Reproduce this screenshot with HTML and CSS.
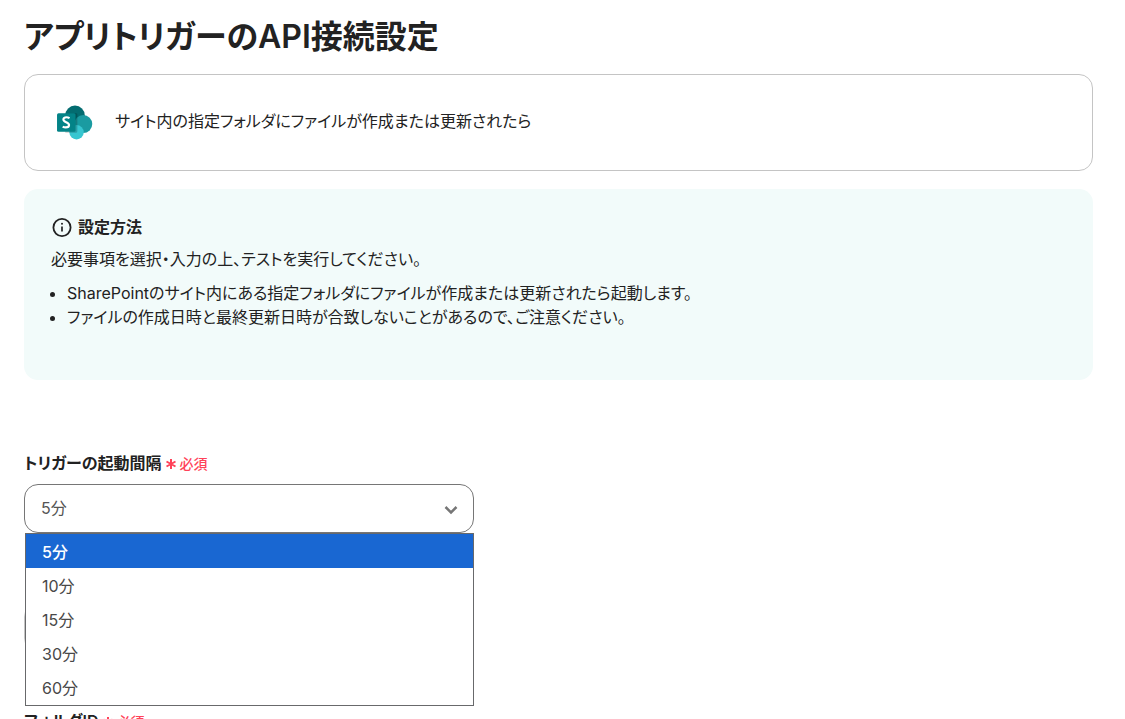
FILE: index.html
```html
<!DOCTYPE html>
<html lang="ja">
<head>
<meta charset="utf-8">
<meta name="viewport" content="width=device-width, initial-scale=1">
<title>アプリトリガーのAPI接続設定</title>
<link rel="stylesheet" href="styles.css">
</head>
<body>
<main class="page">
  <h1 class="title">アプリトリガーのAPI接続設定</h1>

  <section class="trigger-card">
    <svg class="trigger-logo" viewBox="0 0 36 36" aria-hidden="true">
      <circle cx="18.5" cy="11" r="9.5" fill="#036c70"/>
      <circle cx="26.500" cy="19.500" r="8.800" fill="#1a9ba1"/>
      <circle cx="20" cy="27.500" r="7" fill="#37c6d0"/>
      <path d="M9 9h10.500a1.300 1.300 0 0 1 1.300 1.300v16.200a1.500 1.500 0 0 1-1.500 1.500H9z" fill="#000" opacity=".2"/>
      <rect x="1" y="9" width="18" height="18" rx="1.500" fill="#038387"/>
      <path d="M13.200 13.800c-1-.6-2-.9-3.100-.9-1.700 0-2.900.8-2.900 2.200 0 3 5.500 2.200 5.500 5.300 0 1.500-1.300 2.400-3.200 2.400-1.100 0-2.200-.3-3-.8" fill="none" stroke="#fff" stroke-width="2.100"/>
    </svg>
    <p class="trigger-text">サイト内の指定フォルダにファイルが作成または更新されたら</p>
  </section>

  <section class="guide">
    <h2 class="guide-title">
      <svg class="guide-icon" viewBox="0 0 20 20" aria-hidden="true">
        <circle cx="10.500" cy="10.500" r="8.600" fill="none" stroke="#222" stroke-width="1.800"/>
        <path d="M10.500 9.500v5" stroke="#222" stroke-width="1.700"/>
        <circle cx="10.500" cy="6.800" r="1" fill="#222"/>
      </svg>
      設定方法
    </h2>
    <p class="guide-text">必要事項を選択・入力の上、テストを実行してください。</p>
    <ul class="guide-list">
      <li>SharePointのサイト内にある指定フォルダにファイルが作成または更新されたら起動します。</li>
      <li>ファイルの作成日時と最終更新日時が合致しないことがあるので、ご注意ください。</li>
    </ul>
  </section>

  <form class="form">
    <div class="field">
      <div class="label-row">
        <label class="label" for="interval">トリガーの起動間隔</label>
        <span class="required">
          <svg class="asterisk" viewBox="0 0 12 12" aria-hidden="true"><path d="M6 1v10M1.500 3.500l9 5M10.500 3.500l-9 5"/></svg>
          必須
        </span>
      </div>
      <div class="select-box">
        <select class="select" id="interval">
          <option>5分</option>
          <option>10分</option>
          <option>15分</option>
          <option>30分</option>
          <option>60分</option>
        </select>
        <svg class="chevron" viewBox="0 0 14 10" aria-hidden="true"><path d="M1.500 2L7 7.500 12.500 2"/></svg>
        <ul class="options" role="listbox" aria-label="トリガーの起動間隔">
          <li class="option option-active" role="option" aria-selected="true">5分</li>
          <li class="option" role="option" aria-selected="false">10分</li>
          <li class="option" role="option" aria-selected="false">15分</li>
          <li class="option" role="option" aria-selected="false">30分</li>
          <li class="option" role="option" aria-selected="false">60分</li>
        </ul>
      </div>
    </div>
    <div class="field field-covered">
      <input class="input" type="text" aria-label="ID">
    </div>
    <div class="field">
      <div class="label-row">
        <label class="label" for="folder">フォルダID</label>
        <span class="required">
          <svg class="asterisk" viewBox="0 0 12 12" aria-hidden="true"><path d="M6 1v10M1.500 3.500l9 5M10.500 3.500l-9 5"/></svg>
          必須
        </span>
      </div>
      <input class="input" id="folder" type="text">
    </div>
  </form>
</main>
</body>
</html>
```
FILE: styles.css
```css
* {
  box-sizing: border-box;
}

html {
  overflow: hidden;
}

body {
  margin: 0;
  height: 100vh;
  overflow: hidden;
  background: #fff;
  color: #222;
  font-family: Inter, "Noto Sans CJK JP", sans-serif;
  font-size: 16px;
  line-height: 24px;
  font-feature-settings: "palt";
}

h1, h2, p, ul {
  margin: 0;
  padding: 0;
}

.page {
  padding: 13px 32px 0 24px;
}

.title {
  font-size: 32px;
  line-height: 48px;
  font-weight: 600;
}

.trigger-card {
  display: flex;
  align-items: center;
  gap: 22px;
  margin-top: 13px;
  padding: 29px 31px;
  border: 1px solid #c4c4c4;
  border-radius: 14px;
}

.trigger-logo {
  width: 37px;
  height: 37px;
}

.trigger-text {
  padding-bottom: 4px;
}

.guide {
  margin-top: 18px;
  padding: 26px 27px 51px;
  border-radius: 14px;
  background: #f2fbfa;
}

.guide-title {
  display: flex;
  align-items: center;
  gap: 6px;
  font-size: 16px;
  font-weight: 600;
}

.guide-icon {
  width: 21px;
  height: 20px;
  overflow: visible;
}

.guide-text {
  margin-top: 8px;
}

.guide-list {
  margin-top: 10px;
  padding-left: 16px;
}

.form {
  display: flex;
  flex-direction: column;
  margin-top: 71px;
}

.label-row {
  display: flex;
  align-items: center;
  gap: 3px;
}

.label {
  font-weight: 600;
}

.required {
  display: flex;
  align-items: center;
  gap: 3px;
  padding-top: 1px;
  color: #ff4259;
  font-size: 14px;
  line-height: 20px;
  font-weight: 500;
}

.asterisk {
  width: 12px;
  height: 12px;
  fill: none;
  stroke: #ff4259;
  stroke-width: 2;
}

.select-box {
  position: relative;
  max-width: 450px;
  margin-top: 9px;
}

.select,
.input {
  display: block;
  width: 100%;
  height: 49px;
  padding: 0 16px 2px;
  border: 1px solid #767676;
  border-radius: 14px;
  background: #fff;
  color: #555;
  font: inherit;
  font-feature-settings: inherit;
  appearance: none;
}

.input {
  max-width: 450px;
  border-color: #c4c4c4;
}

.chevron {
  position: absolute;
  top: 21px;
  right: 16px;
  width: 14px;
  height: 10px;
  fill: none;
  stroke: #767676;
  stroke-width: 2.5;
}

.options {
  position: absolute;
  z-index: 1;
  top: 49px;
  left: 1px;
  right: 0;
  border: 1px solid #68696b;
  padding-bottom: 1px;
  background: #fff;
  list-style: none;
}

.option {
  padding: 6px 16px 4px;
  color: #484848;
}

.option-active {
  background: #1967d2;
  color: #fff;
  font-weight: 500;
}

.field-covered {
  margin: 70px 0 57px;
}
```
